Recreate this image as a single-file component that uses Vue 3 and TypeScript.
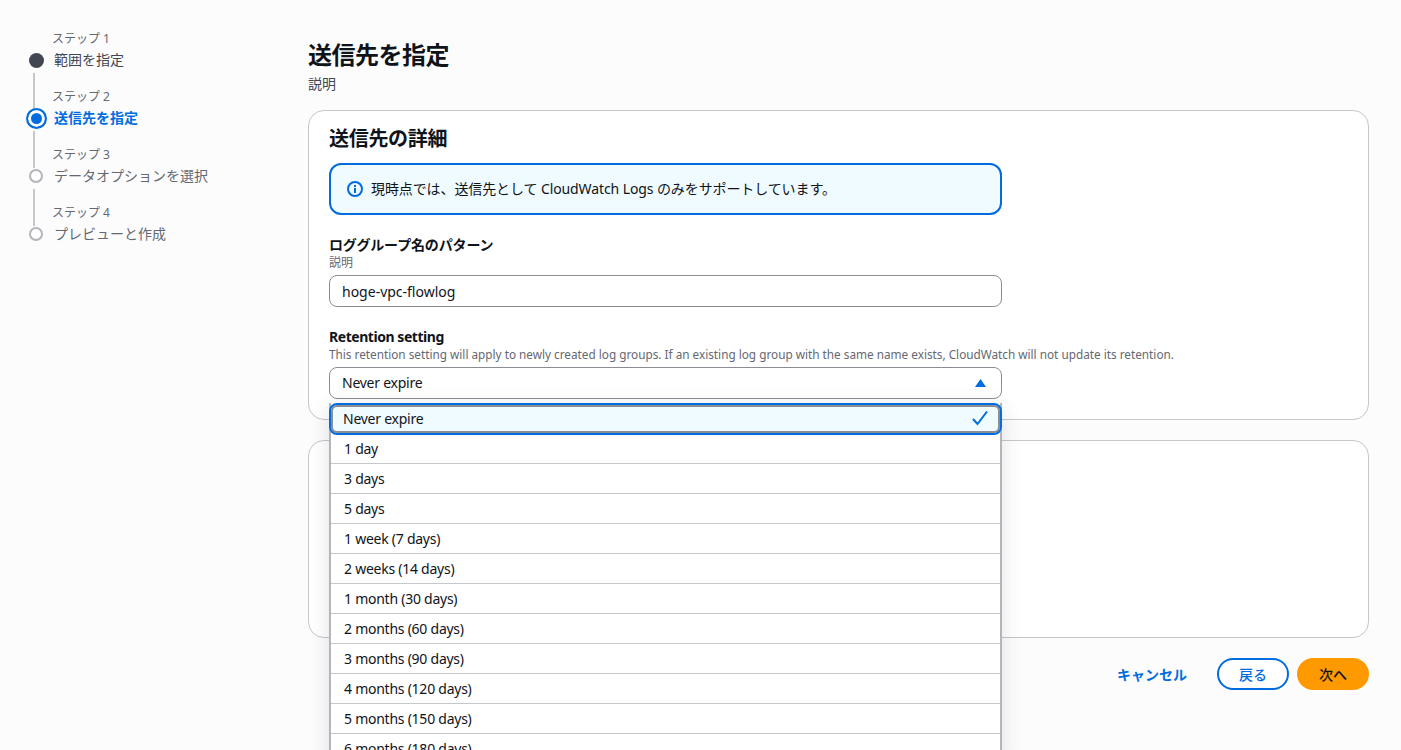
<script setup lang="ts">
interface Step { label: string; title: string; state: 'done' | 'active' | 'todo' }
const steps: Step[] = [
  { label: 'ステップ 1', title: '範囲を指定', state: 'done' },
  { label: 'ステップ 2', title: '送信先を指定', state: 'active' },
  { label: 'ステップ 3', title: 'データオプションを選択', state: 'todo' },
  { label: 'ステップ 4', title: 'プレビューと作成', state: 'todo' },
]
const options: string[] = [
  '1 day', '3 days', '5 days', '1 week (7 days)', '2 weeks (14 days)', '1 month (30 days)',
  '2 months (60 days)', '3 months (90 days)', '4 months (120 days)', '5 months (150 days)', '6 months (180 days)',
]
</script>

<template>
  <div class="page">
    <nav class="side">
      <div v-for="(s, i) in steps" :key="s.label" class="step" :class="s.state">
        <div class="rail"><span v-if="i > 0" class="line"></span></div>
        <div class="label">{{ s.label }}</div>
        <div class="dotcell"><span class="dot"></span></div>
        <div class="title">{{ s.title }}</div>
      </div>
    </nav>
    <main class="main">
      <h1>送信先を指定</h1>
      <p class="lead">説明</p>
      <section class="card first">
        <h2>送信先の詳細</h2>
        <div class="alert">
          <svg class="info" width="16" height="16" viewBox="0 0 16 16" fill="none" stroke="#006ce0" stroke-width="2">
            <circle cx="8" cy="8" r="7" />
            <path d="M8 7v5M8 4v2" />
          </svg>
          <span>現時点では、送信先として CloudWatch Logs のみをサポートしています。</span>
        </div>
        <div class="field name">
          <div class="flabel">ロググループ名のパターン</div>
          <div class="fdesc">説明</div>
          <div class="input">hoge-vpc-flowlog</div>
        </div>
        <div class="field retention">
          <div class="flabel latin">Retention setting</div>
          <div class="fdesc small">This retention setting will apply to newly created log groups. If an existing log group with the same name exists, CloudWatch will not update its retention.</div>
          <div class="selectwrap">
            <div class="input select">
              <span>Never expire</span>
              <svg width="11" height="8" viewBox="0 0 11 8"><path d="M5.5 0 11 8H0Z" fill="#006ce0" /></svg>
            </div>
            <div class="menu">
              <div class="opt selected">
                <span>Never expire</span>
                <svg width="16" height="16" viewBox="0 0 16 16" fill="none" stroke="#006ce0" stroke-width="2"><path d="M1 9l4.5 5L15 1.5" /></svg>
              </div>
              <div v-for="o in options" :key="o" class="opt">{{ o }}</div>
            </div>
          </div>
        </div>
      </section>
      <section class="card second"></section>
      <div class="actions">
        <span class="cancel">キャンセル</span>
        <button class="btn back">戻る</button>
        <button class="btn next">次へ</button>
      </div>
    </main>
  </div>
</template>

<style>
html, body { margin: 0; background: #fcfcfd; overflow: hidden; }
</style>

<style scoped>
.page {
  display: flex;
  width: 1401px;
  height: 750px;
  overflow: hidden;
  background: #fcfcfd;
  color: #0f141a;
  font-family: "Noto Sans", "Noto Sans CJK JP", sans-serif;
  font-size: 14px;
}
.side { width: 308px; flex: none; padding-top: 13px; box-sizing: border-box; }
.step {
  display: grid;
  grid-template-columns: 52px 1fr;
  grid-template-rows: 36px 22px;
}
.rail { padding-left: 33px; box-sizing: border-box; }
.line { display: block; width: 2px; height: 37px; background: #c6c6cd; margin-top: 2px; }
.label { font-size: 12px; line-height: 16px; color: #656871; align-self: end; padding-bottom: 2px; }
.dotcell { display: flex; justify-content: center; align-items: center; width: 72px; }
.dot { display: block; flex: none; box-sizing: border-box; border-radius: 50%; }
.done .dot { width: 15px; height: 15px; background: #424650; }
.active .dot { width: 21px; height: 21px; border: 2.5px solid #006ce0; background: #006ce0; box-shadow: inset 0 0 0 3px #fff; }
.todo .dot { width: 14px; height: 14px; border: 2px solid #b4b4bb; background: #fff; }
.title { font-size: 14px; line-height: 22px; padding-left: 2px; color: #424650; white-space: nowrap; }
.active .title { color: #006ce0; font-weight: 700; }
.todo .title { color: #656871; }

.main { width: 1061px; flex: none; padding-top: 40px; box-sizing: border-box; }
h1 { margin: 0; font-size: 24px; line-height: 30px; font-weight: 700; letter-spacing: -0.5px; color: #0f141a; }
.lead { margin: 4px 0 16px; font-size: 14px; line-height: 20px; color: #424650; }
.card { background: #fff; border: 1px solid #c6c6cd; border-radius: 16px; box-sizing: border-box; padding: 0 20px; }
.first { height: 310px; padding-top: 15px; }
.second { height: 198px; margin-top: 20px; }
h2 { margin: 0; font-size: 20px; line-height: 26px; font-weight: 700; letter-spacing: -0.3px; color: #0f141a; }
.alert {
  width: 673px; height: 52px; margin-top: 11px; box-sizing: border-box;
  display: flex; align-items: center; gap: 8px;
  padding: 0 16px 2px;
  border: 2px solid #006ce0; border-radius: 12px; background: #f0fbff;
  font-size: 14px; letter-spacing: -0.1px; color: #0f141a;
}
.info { flex: none; margin-top: 2px; }
.field { width: 673px; }
.name { margin-top: 21px; }
.retention { margin-top: 21px; }
.flabel { font-size: 14px; line-height: 18px; font-weight: 700; letter-spacing: -0.15px; color: #0f141a; }
.latin { letter-spacing: -0.45px; }
.fdesc { font-size: 12px; line-height: 16px; color: #656871; margin-bottom: 4px; margin-top: 1px; white-space: nowrap; }
.small { font-size: 11.77px; margin-top: 0; margin-bottom: 5px; }
.input {
  height: 32px; box-sizing: border-box; padding: 0 12px;
  display: flex; align-items: center;
  border: 1px solid #8c8c94; border-radius: 8px; background: #fff;
  font-size: 14px; color: #0f141a;
}
.selectwrap { position: relative; }
.select { justify-content: space-between; padding-right: 15px; padding-bottom: 1px; letter-spacing: -0.25px; }
.menu {
  position: absolute; left: 0; right: 0; top: 36px;
  background: #fff;
  border-left: 2px solid #b4b4bb; border-right: 2px solid #b4b4bb;
  box-shadow: 0 4px 20px rgba(0, 7, 22, 0.12);
  z-index: 2;
}
.opt {
  height: 30px; box-sizing: border-box; padding: 0 13px;
  display: flex; align-items: center;
  border-bottom: 1px solid #c6c6cd;
  font-size: 14px; letter-spacing: -0.25px; color: #0f141a;
}
.selected {
  height: 32px; margin: 0 -2px -1px; padding: 0 12px 2px;
  justify-content: space-between;
  background: #f0fbff;
  border: 2px solid #006ce0; border-radius: 8px;
  box-shadow: inset 0 0 0 2px #8c8c94;
  position: relative;
}
.actions { display: flex; align-items: center; justify-content: flex-end; margin-top: 20px; height: 32px; }
.cancel { font-size: 14px; font-weight: 700; color: #006ce0; margin-right: 30px; }
.btn {
  width: 72px; height: 32px; border-radius: 20px; box-sizing: border-box;
  font-family: inherit; font-size: 14px; font-weight: 500; padding: 0; cursor: pointer;
}
.back { background: #fff; border: 2px solid #006ce0; color: #006ce0; margin-right: 8px; }
.next { background: #ff9900; border: 2px solid #ff9900; color: #0f141a; }
</style>
